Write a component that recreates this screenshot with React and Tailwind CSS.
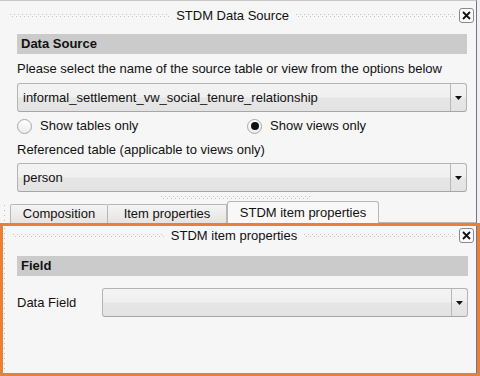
import React from 'react'

function Grip({ className = '' }) {
  return (
    <svg className={className} height="4" width="100%">
      <defs>
        <pattern id="grip" width="4" height="4" patternUnits="userSpaceOnUse">
          <rect x="0" y="0" width="1" height="1" fill="#c4c4c4" />
          <rect x="2" y="2" width="1" height="1" fill="#c4c4c4" />
        </pattern>
      </defs>
      <rect width="100%" height="4" fill="url(#grip)" />
    </svg>
  )
}

function CloseButton() {
  return (
    <div className="w-[15px] h-[15px] rounded-[3px] border border-[#8a8a8a] bg-[#fafafa] flex items-center justify-center">
      <svg width="9" height="9" viewBox="0 0 9 9">
        <path d="M1 1 L8 8 M8 1 L1 8" stroke="#111" strokeWidth="1.8" />
      </svg>
    </div>
  )
}

function TitleRow({ title, className = '' }) {
  return (
    <div className={`flex items-center ${className}`}>
      <Grip className="flex-1 ml-[10px]" />
      <span className="px-[7px] whitespace-nowrap text-[#111]">{title}</span>
      <Grip className="flex-1" />
      <div className="ml-[4px] mr-[2px]">
        <CloseButton />
      </div>
    </div>
  )
}

function SectionBar({ children }) {
  return (
    <div className="h-[20px] bg-[#cbcbcb] pl-[4px] flex items-center font-bold text-[#111]">
      {children}
    </div>
  )
}

function Combo({ value, className = '' }) {
  return (
    <div
      className={`h-[29px] rounded-[3px] border border-[#b4b4b4] border-b-[#a6a6a6] bg-[linear-gradient(#f3f3f3_0%,#f0f0f0_48%,#e6e6e6_52%,#e3e3e3_100%)] flex items-stretch ${className}`}
    >
      <div className="flex-1 pl-[5px] flex items-center text-[#111] whitespace-nowrap">{value}</div>
      <div className="w-[16px] border-l border-[#b8b8b8] flex items-center justify-center">
        <svg width="7" height="4" viewBox="0 0 7 4">
          <path d="M0 0 H7 L3.5 4 Z" fill="#111" />
        </svg>
      </div>
    </div>
  )
}

function Radio({ checked, label }) {
  return (
    <div className="flex items-center gap-[8px]">
      <div className="w-[15px] h-[15px] rounded-full border border-[#a8a8a8] bg-[linear-gradient(#ffffff,#ececec)] flex items-center justify-center">
        {checked && <div className="w-[8px] h-[8px] rounded-full bg-[#111]" />}
      </div>
      <span className="text-[#111]">{label}</span>
    </div>
  )
}

export default function App() {
  return (
    <div
      className="w-[480px] h-[376px] bg-[#f0f0f0] flex flex-col text-[13px] leading-[16px] overflow-hidden"
      style={{ fontFamily: '"Liberation Sans", Arial, sans-serif' }}
    >
      {/* STDM Data Source dock */}
      <div className="flex pr-[3px] shrink-0">
        <div className="flex-1 bg-[#f6f6f6] border-t border-[#c8c8c8] border-r border-r-[#6e7884]">
          <TitleRow title="STDM Data Source" className="h-[27px] pt-[2px]" />
          <div className="pl-[17px] pr-[9px] pt-[6px]">
            <SectionBar>Data Source</SectionBar>
            <p className="mt-[7px] text-[#111]">
              Please select the name of the source table or view from the options below
            </p>
            <Combo value="informal_settlement_vw_social_tenure_relationship" className="mt-[6px]" />
            <div className="mt-[6px] h-[16px] flex">
              <div className="w-[230px]">
                <Radio label="Show tables only" />
              </div>
              <Radio checked label="Show views only" />
            </div>
            <p className="mt-[8px] text-[#111]">Referenced table (applicable to views only)</p>
            <Combo value="person" className="mt-[5px]" />
          </div>
          <div className="flex justify-center mt-[4px] h-[4px]">
            <Grip className="w-[150px] -ml-[4px]" />
          </div>
          {/* Tabs */}
          <div className="flex items-end h-[23px] pl-[10px] relative">
            <div className="absolute left-[3px] top-[4px] w-[3px] h-[19px]">
              <svg width="3" height="19">
                <pattern id="vgrip" width="3" height="5" patternUnits="userSpaceOnUse">
                  <rect x="1" y="1" width="1" height="1" fill="#bdbdbd" />
                </pattern>
                <rect width="3" height="19" fill="url(#vgrip)" />
              </svg>
            </div>
            <div className="h-[19px] w-[98px] border border-b-0 border-[#b8b8b8] rounded-t-[2px] bg-[linear-gradient(#f4f4f4,#e4e4e4)] flex items-center justify-center text-[#111]">
              Composition
            </div>
            <div className="h-[19px] w-[119px] border border-l-0 border-b-0 border-[#b8b8b8] bg-[linear-gradient(#f4f4f4,#e4e4e4)] flex items-center justify-center text-[#111]">
              Item properties
            </div>
            <div className="h-[22px] w-[152px] border border-b-0 border-[#b8b8b8] rounded-t-[3px] bg-[#f8f8f8] flex items-center justify-center text-[#111]">
              STDM item properties
            </div>
            <div className="flex-1 h-[22px] border-b border-[#b8b8b8]" />
          </div>
        </div>
      </div>

      {/* STDM item properties dock (highlighted) */}
      <div className="flex-1 min-h-0 overflow-hidden border-[3px] border-[#ec7f33] bg-[#f6f6f6] flex">
        <div className="w-[5px] self-stretch bg-[radial-gradient(circle_at_1.5px_2.5px,#bdbdbd_0.8px,transparent_1px)] bg-[length:5px_5px]" />
        <div className="flex-1 border-r border-[#6e7884] -ml-[5px]">
          <TitleRow title="STDM item properties" className="h-[17px] pt-[2px]" />
          <div className="pl-[14px] pr-[8px] pt-[13px]">
            <SectionBar>Field</SectionBar>
            <div className="mt-[12px] flex items-center">
              <span className="w-[85px] text-[#111]">Data Field</span>
              <Combo value="" className="flex-1" />
            </div>
          </div>
        </div>
      </div>
    </div>
  )
}
